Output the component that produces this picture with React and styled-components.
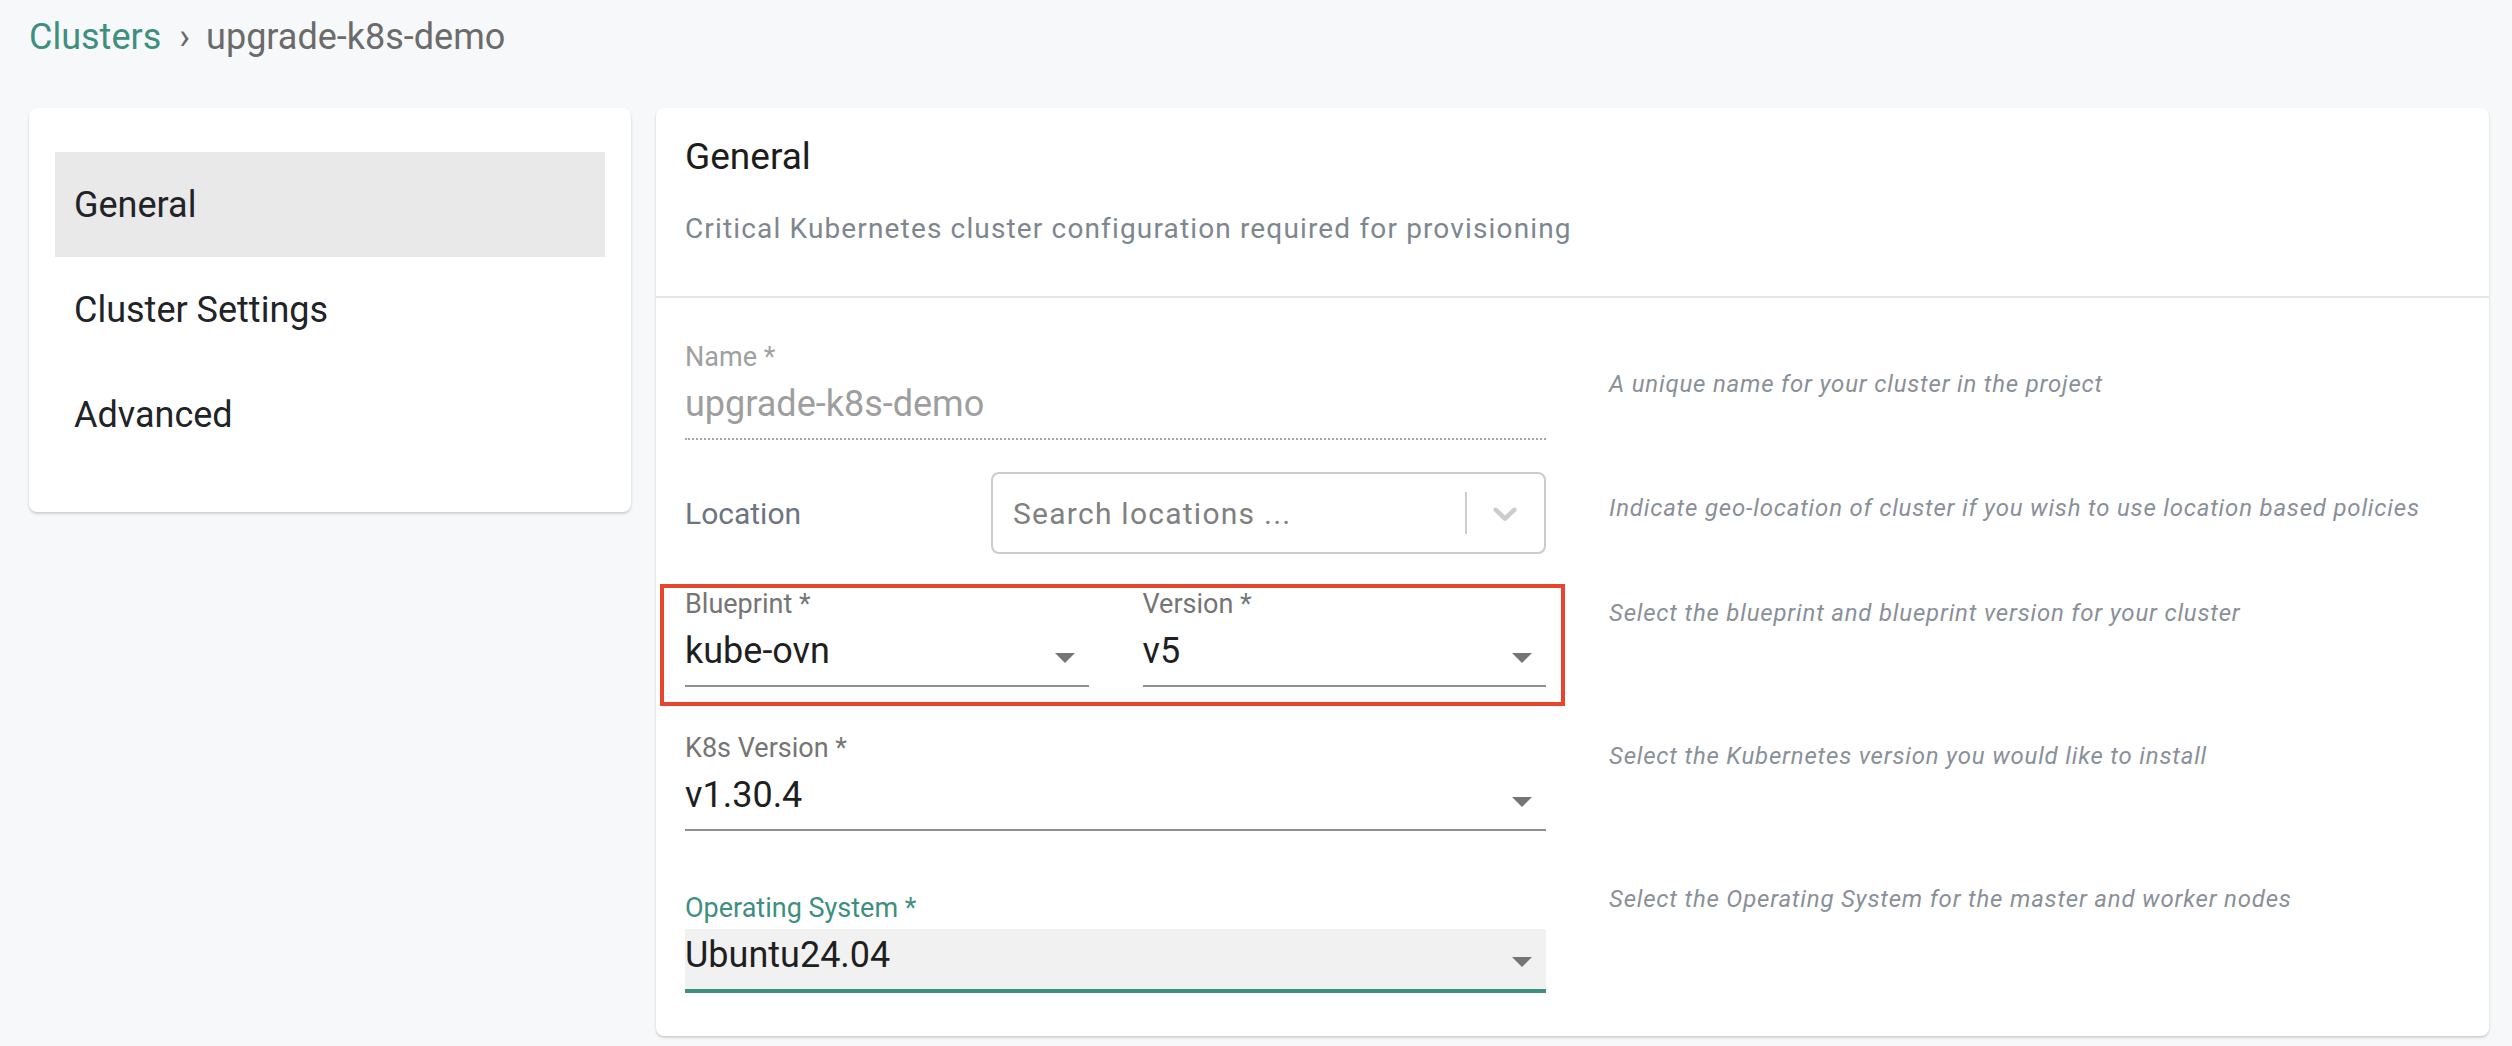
import React from "react";
import styled, { createGlobalStyle } from "styled-components";

const TEAL = "#3d8f80";

const GlobalStyle = createGlobalStyle`
  html, body {
    margin: 0;
    padding: 0;
    background: #f7f8fa;
    font-family: Roboto, "Noto Sans", "Liberation Sans", sans-serif;
  }
  * { box-sizing: border-box; }
`;

const navItems = ["General", "Cluster Settings", "Advanced"];

function ArrowDrop() {
  return (
    <ArrowIcon viewBox="0 0 24 24">
      <path d="M7 10l5 5 5-5z" />
    </ArrowIcon>
  );
}

function Field({ label, value, disabled, focused, select }) {
  return (
    <FieldWrap>
      <FieldLabel $disabled={disabled} $focused={focused}>
        {label}
      </FieldLabel>
      <InputBox $disabled={disabled} $focused={focused}>
        <InputValue $disabled={disabled}>{value}</InputValue>
        {select && <ArrowDrop />}
      </InputBox>
    </FieldWrap>
  );
}

export default function App() {
  return (
    <Page>
      <GlobalStyle />
      <Breadcrumbs>
        <CrumbLink>Clusters</CrumbLink>
        <CrumbSep>›</CrumbSep>
        <CrumbCurrent>upgrade-k8s-demo</CrumbCurrent>
      </Breadcrumbs>

      <Layout>
        <SideCard>
          {navItems.map((item, i) => (
            <NavItem key={item} $active={i === 0}>
              {item}
            </NavItem>
          ))}
        </SideCard>

        <MainCard>
          <CardHeader>
            <Title>General</Title>
            <Subtitle>
              Critical Kubernetes cluster configuration required for
              provisioning
            </Subtitle>
          </CardHeader>

          <CardBody>
            <Row $mt={0}>
              <Field label="Name *" value="upgrade-k8s-demo" disabled />
              <Help $top={29}>A unique name for your cluster in the project</Help>
            </Row>

            <Row $mt={32}>
              <LocationRow>
                <LocationLabel>Location</LocationLabel>
                <SelectBox>
                  <Placeholder>Search locations ...</Placeholder>
                  <IndicatorSep />
                  <Indicator>
                    <svg viewBox="0 0 20 20" width="40" height="40">
                      <path
                        fill="currentColor"
                        d="M4.516 7.548c0.436-0.446 1.043-0.481 1.576 0l3.908 3.747 3.908-3.747c0.533-0.481 1.141-0.446 1.574 0 0.436 0.445 0.408 1.197 0 1.615-0.406 0.418-4.695 4.502-4.695 4.502-0.217 0.223-0.502 0.335-0.787 0.335s-0.57-0.112-0.789-0.335c0 0-4.287-4.084-4.695-4.502s-0.436-1.17 0-1.615z"
                      />
                    </svg>
                  </Indicator>
                </SelectBox>
              </LocationRow>
              <Help $top={22}>
                Indicate geo-location of cluster if you wish to use location
                based policies
              </Help>
            </Row>

            <Row $mt={30}>
              <Highlight>
                <Field label="Blueprint *" value="kube-ovn" select />
                <Field label="Version *" value="v5" select />
              </Highlight>
              <Help $top={15}>
                Select the blueprint and blueprint version for your cluster
              </Help>
            </Row>

            <Row $mt={26}>
              <Field label="K8s Version *" value="v1.30.4" select />
              <Help $top={10}>
                Select the Kubernetes version you would like to install
              </Help>
            </Row>

            <Row $mt={54}>
              <FieldCell $top={7}>
                <Field
                  label="Operating System *"
                  value="Ubuntu24.04"
                  focused
                  select
                />
              </FieldCell>
              <Help $top={0}>
                Select the Operating System for the master and worker nodes
              </Help>
            </Row>
          </CardBody>
        </MainCard>
      </Layout>
    </Page>
  );
}

/* ==================== STYLED COMPONENTS ==================== */

const Page = styled.div`
  min-height: 100vh;
  padding: 16px 23px 0 29px;
  background: #f7f8fa;
`;

const Breadcrumbs = styled.div`
  display: flex;
  align-items: baseline;
  font-size: 36px;
  line-height: 42px;
`;

const CrumbLink = styled.span`
  color: ${TEAL};
`;

const CrumbSep = styled.span`
  color: #6b6b6b;
  margin: 0 16px 0 18px;
`;

const CrumbCurrent = styled.span`
  color: #6b6b6b;
`;

const Layout = styled.div`
  display: flex;
  align-items: flex-start;
  gap: 25px;
  margin-top: 50px;
`;

const Card = styled.div`
  background: #fff;
  border-radius: 8px;
  box-shadow: 0 2px 3px rgba(0, 0, 0, 0.12), 0 1px 2px rgba(0, 0, 0, 0.08);
`;

const SideCard = styled(Card)`
  width: 602px;
  flex-shrink: 0;
  padding: 44px 26px 45px;
`;

const NavItem = styled.div`
  display: flex;
  align-items: center;
  height: 105px;
  padding-left: 19px;
  font-size: 36px;
  color: #212327;
  background: ${({ $active }) => ($active ? "#e9e9e9" : "transparent")};
`;

const MainCard = styled(Card)`
  flex: 1;
`;

const CardHeader = styled.div`
  padding: 28px 29px 51px;
  border-bottom: 2px solid #e6e6e6;
`;

const Title = styled.h2`
  margin: 0 0 34px;
  font-size: 37px;
  line-height: 42px;
  font-weight: 400;
  color: #1c1c1c;
`;

const Subtitle = styled.p`
  margin: 0;
  font-size: 28px;
  line-height: 33px;
  letter-spacing: 1.15px;
  color: #7e868f;
`;

const CardBody = styled.div`
  padding: 43px 29px 43px;
`;

const Row = styled.div`
  display: grid;
  grid-template-columns: 861px 1fr;
  column-gap: 63px;
  margin-top: ${({ $mt }) => $mt}px;
`;

const FieldCell = styled.div`
  padding-top: ${({ $top }) => $top}px;
`;

const Help = styled.div`
  padding-top: ${({ $top }) => $top}px;
  font-size: 24px;
  line-height: 28px;
  letter-spacing: 0.8px;
  font-style: italic;
  color: #8a9099;
`;

const FieldWrap = styled.div`
  display: flex;
  flex-direction: column;
`;

const FieldLabel = styled.label`
  font-size: 27px;
  line-height: 32px;
  margin-bottom: 5px;
  color: ${({ $disabled, $focused }) =>
    $focused ? TEAL : $disabled ? "#a0a0a0" : "#757575"};
`;

const InputBox = styled.div`
  display: flex;
  align-items: flex-start;
  padding: 5px 0 13px;
  background: ${({ $focused }) => ($focused ? "#f1f1f1" : "transparent")};
  border-bottom: ${({ $disabled, $focused }) =>
    $focused
      ? `4px solid ${TEAL}`
      : $disabled
      ? "2px dotted #a8a8a8"
      : "2px solid #8e8e8e"};
`;

const InputValue = styled.div`
  flex: 1;
  font-size: 36px;
  line-height: 42px;
  color: ${({ $disabled }) => ($disabled ? "#9e9e9e" : "#1f1f1f")};
`;

const ArrowIcon = styled.svg`
  width: 48px;
  height: 48px;
  margin: 3px 0 -9px;
  fill: #757575;
  flex-shrink: 0;
`;

const LocationRow = styled.div`
  display: flex;
  align-items: center;
`;

const LocationLabel = styled.span`
  width: 306px;
  flex-shrink: 0;
  font-size: 30px;
  color: #6d7580;
`;

const SelectBox = styled.div`
  flex: 1;
  display: flex;
  align-items: center;
  height: 82px;
  border: 2px solid #cccccc;
  border-radius: 8px;
`;

const Placeholder = styled.span`
  flex: 1;
  padding-left: 20px;
  font-size: 30px;
  letter-spacing: 1.25px;
  color: #808080;
`;

const IndicatorSep = styled.span`
  align-self: stretch;
  width: 2px;
  margin: 18px 0;
  background: #cccccc;
`;

const Indicator = styled.span`
  display: flex;
  padding: 0 19px 0 18px;
  color: #cccccc;
`;

const Highlight = styled.div`
  display: grid;
  grid-template-columns: 1fr 1fr;
  column-gap: 54px;
  margin: 0 -19px 0 -25px;
  padding: 0 15px 15px 21px;
  border: 4px solid #e9442d;
`;
